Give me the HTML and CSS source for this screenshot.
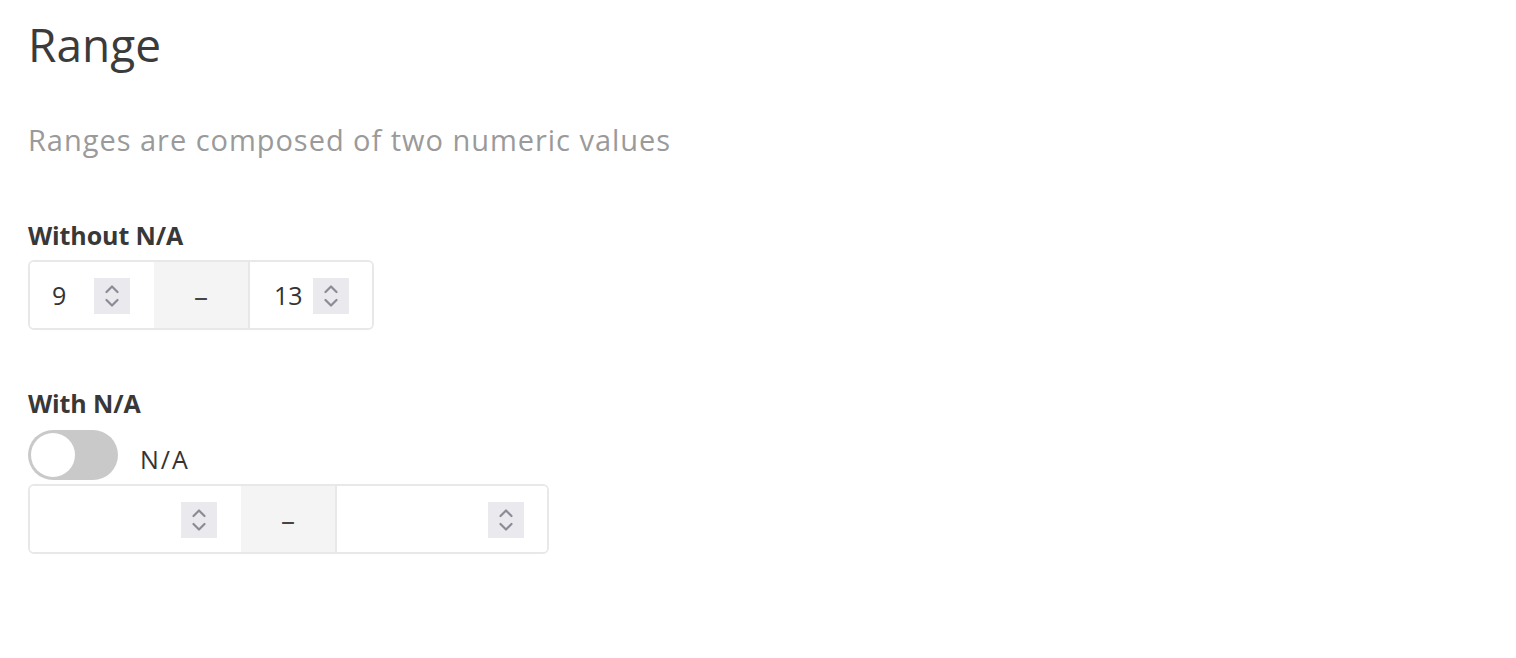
FILE: index.html
```html
<!DOCTYPE html>
<html>
<head>
<meta charset="utf-8">
<link rel="stylesheet" href="styles.css">
</head>
<body>
<main class="page">
  <h1 class="title">Range</h1>
  <p class="subtitle">Ranges are composed of two numeric values</p>

  <section class="field">
    <div class="label">Without N/A</div>
    <div class="range">
      <div class="num num-a"><span class="value">9</span><span class="spin"><svg width="14" height="24" viewBox="0 0 14 24"><path d="M1.5 8 L7 2.5 L12.5 8" /><path d="M1.5 16 L7 21.5 L12.5 16" /></svg></span></div>
      <div class="sep">–</div>
      <div class="num num-b"><span class="value">13</span><span class="spin"><svg width="14" height="24" viewBox="0 0 14 24"><path d="M1.5 8 L7 2.5 L12.5 8" /><path d="M1.5 16 L7 21.5 L12.5 16" /></svg></span></div>
    </div>
  </section>

  <section class="field field-na">
    <div class="label">With N/A</div>
    <div class="toggle-row">
      <span class="toggle"><span class="knob"></span></span>
      <span class="toggle-text">N/A</span>
    </div>
    <div class="range">
      <div class="num num-c"><span class="value"></span><span class="spin"><svg width="14" height="24" viewBox="0 0 14 24"><path d="M1.5 8 L7 2.5 L12.5 8" /><path d="M1.5 16 L7 21.5 L12.5 16" /></svg></span></div>
      <div class="sep">–</div>
      <div class="num num-d"><span class="value"></span><span class="spin"><svg width="14" height="24" viewBox="0 0 14 24"><path d="M1.5 8 L7 2.5 L12.5 8" /><path d="M1.5 16 L7 21.5 L12.5 16" /></svg></span></div>
    </div>
  </section>
</main>
</body>
</html>
```

FILE: styles.css
```css
html, body {
  margin: 0;
  padding: 0;
  background: #ffffff;
}
body {
  font-family: "Open Sans", "Noto Sans", sans-serif;
  color: #333333;
}
.page {
  padding: 14px 28px 0 28px;
}
.title {
  margin: 0;
  font-size: 46px;
  font-weight: 400;
  line-height: 60px;
  color: #3b3b3b;
}
.subtitle {
  margin: 48px 0 0 0;
  font-size: 29px;
  line-height: 36px;
  letter-spacing: 0.97px;
  color: #9a9a9a;
}
.field {
  margin-top: 60px;
}
.label {
  font-size: 25px;
  font-weight: 700;
  line-height: 34px;
  color: #383838;
  letter-spacing: -0.1px;
}
.range {
  display: inline-flex;
  margin-top: 8px;
  height: 66px;
  border: 2px solid #e8e8e8;
  border-radius: 6px;
  overflow: hidden;
}
.num {
  display: flex;
  align-items: center;
  background: #fff;
  box-sizing: border-box;
}
.num-a { width: 124px; padding-left: 22px; }
.num-b { width: 124px; padding-left: 24px; border-left: 2px solid #e8e8e8; }
.num-c { width: 211px; padding-left: 22px; }
.num-d { width: 212px; padding-left: 22px; border-left: 2px solid #e8e8e8; }
.value {
  flex: 1;
  font-size: 25px;
  color: #333;
}
.spin {
  width: 36px;
  height: 36px;
  margin-right: 24px;
  background: #e9e9ee;
  display: flex;
  align-items: center;
  justify-content: center;
  margin-top: 2px;
}
.num-b .spin, .num-d .spin { margin-right: 23px; }
.spin svg path {
  fill: none;
  stroke: #8b8b96;
  stroke-width: 2.2;
  stroke-linecap: round;
  stroke-linejoin: round;
}
.sep {
  width: 94px;
  background: #f4f4f4;
  display: flex;
  align-items: center;
  justify-content: center;
  font-size: 28px;
  color: #444;
}
.field-na {
  margin-top: 56px;
}
.toggle-row {
  display: flex;
  align-items: center;
  margin-top: 10px;
  height: 50px;
}
.toggle {
  position: relative;
  width: 90px;
  height: 50px;
  border-radius: 25px;
  background: #c9c9c9;
  box-sizing: border-box;
}
.knob {
  position: absolute;
  left: 3px;
  top: 3px;
  width: 44px;
  height: 44px;
  border-radius: 50%;
  background: #fff;
}
.toggle-text {
  margin-left: 22px;
  font-size: 25px;
  letter-spacing: 2px;
  color: #333;
  margin-top: 8px;
}
.field-na .range {
  margin-top: 4px;
}
```
